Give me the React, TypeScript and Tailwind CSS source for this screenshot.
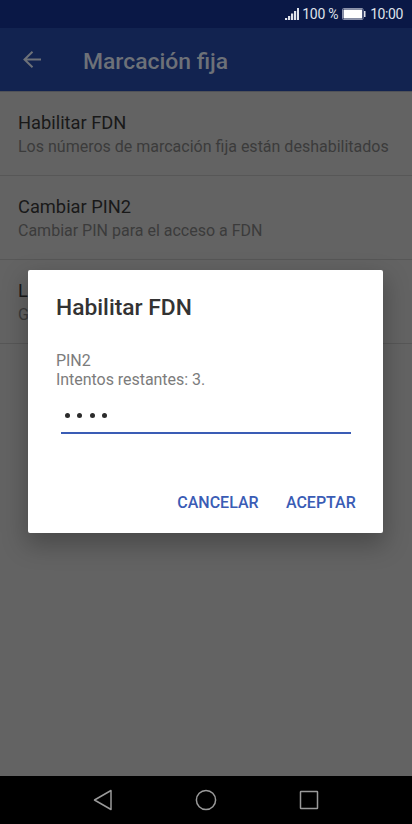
import clsx from "clsx";
import * as React from "react";

interface Preference {
  title: string;
  summary: string;
}

const preferences: Preference[] = [
  {
    title: "Habilitar FDN",
    summary: "Los números de marcación fija están deshabilitados",
  },
  { title: "Cambiar PIN2", summary: "Cambiar PIN para el acceso a FDN" },
  { title: "L", summary: "G" },
];

function StatusBar() {
  return (
    <div className="flex h-7 shrink-0 items-center justify-end bg-[#0a1846] pr-[9px] text-[14px] leading-none text-[#dfe2ea]">
      <svg
        className="mr-[3px] h-[12px] w-[14px]"
        viewBox="0 0 14 12"
        fill="currentColor"
        aria-hidden="true"
      >
        <rect x="0" y="10" width="2.2" height="2" />
        <rect x="3" y="8" width="2.2" height="4" />
        <rect x="6" y="5.5" width="2.2" height="6.5" />
        <rect x="9" y="3" width="2.2" height="9" />
        <rect x="12" y="0" width="2" height="12" />
      </svg>
      <span className="mr-[4px] tracking-[-0.3px]">100 %</span>
      <svg
        className="mr-[4px] h-[12px] w-[24px]"
        viewBox="0 0 24 12"
        aria-hidden="true"
      >
        <rect
          x="0.5"
          y="0.5"
          width="20.5"
          height="11"
          rx="1"
          fill="none"
          stroke="#8c93ab"
        />
        <rect x="1.5" y="1.5" width="18.5" height="9" fill="#fff" />
        <rect x="22" y="3" width="1.5" height="6" fill="#dfe2ea" />
      </svg>
      <span className="tracking-[-0.4px]">10:00</span>
    </div>
  );
}

function Toolbar() {
  return (
    <header className="flex h-[63px] shrink-0 items-center bg-[#122350] pt-[3px] pl-[23px] text-[#6d7178]">
      <svg
        className="mb-[3px] h-[18px] w-[18px]"
        viewBox="0 0 18 18"
        fill="none"
        stroke="currentColor"
        strokeWidth="2"
        aria-hidden="true"
      >
        <path d="M18 8.5H1.5M9.5 0.7L1.5 8.5L9.5 16.3" />
      </svg>
      <h1 className="mt-[2px] ml-[42px] text-[22.9px] leading-7 font-medium">
        Marcación fija
      </h1>
    </header>
  );
}

function PreferenceRow({ title, summary }: Preference) {
  return (
    <li className="h-[84px] border-b border-[#575757] pt-[18px] pl-[18px] whitespace-nowrap">
      <div className="text-[18.3px] leading-[25px] text-[#191919]">{title}</div>
      <div className="mt-px text-[16px] leading-[22px] text-[#3b3b3b]">
        {summary}
      </div>
    </li>
  );
}

function PinDialog() {
  const [pin, setPin] = React.useState("1234");
  return (
    <div
      role="dialog"
      aria-labelledby="dialog-title"
      className="absolute top-[270px] left-[28.4px] flex h-[263px] w-[355px] flex-col rounded-[2px] bg-white px-[27.6px] shadow-[0_10px_24px_2px_rgba(0,0,0,0.26)]"
    >
      <h2
        id="dialog-title"
        className="mt-[23px] text-[22.8px] leading-[30px] font-medium text-[#333]"
      >
        Habilitar FDN
      </h2>
      <div className="mt-[28px] text-[16px] leading-[19px] tracking-[-0.04px] text-[#7c7c7c]">
        <p>PIN2</p>
        <p>Intentos restantes: 3.</p>
      </div>
      <label
        className={clsx(
          "relative mr-[5px] ml-[4.6px] mt-[7px] flex h-[38px] items-center",
          "border-b-2 border-[#3a5cb5] pt-[3px] pl-[4px]"
        )}
      >
        <input
          aria-label="PIN2"
          type="password"
          inputMode="numeric"
          className="absolute inset-0 w-full opacity-0"
          value={pin}
          onChange={(event) => setPin(event.target.value)}
        />
        <span className="flex gap-[7.6px]" aria-hidden="true">
          {pin.split("").map((_, i) => (
            <span key={i} className="h-[5px] w-[5px] rounded-full bg-[#2b2b2b]" />
          ))}
        </span>
      </label>
      <div className="mt-[57px] flex justify-end gap-[27.3px] text-[16px] leading-6 font-medium text-[#3a5cb5]">
        <button type="button">CANCELAR</button>
        <button type="button">ACEPTAR</button>
      </div>
    </div>
  );
}

function NavigationBar() {
  return (
    <nav className="flex h-12 shrink-0 items-center bg-black pl-[93px] text-[#9a9a9a]">
      <svg
        className="h-[22px] w-[226px]"
        viewBox="0 0 226 22"
        fill="none"
        stroke="currentColor"
        strokeWidth="1.5"
        strokeLinejoin="round"
        aria-hidden="true"
      >
        <path d="M18 1.5V20.5L1.5 11Z" />
        <circle cx="113" cy="11" r="9.6" />
        <rect x="207.5" y="2.5" width="17" height="17" rx="0.5" />
      </svg>
    </nav>
  );
}

export default function App() {
  return (
    <div className="relative flex h-[824px] w-[412px] flex-col overflow-hidden bg-[#636363] font-[Roboto,sans-serif]">
      <StatusBar />
      <Toolbar />
      <ul className="flex-auto border-t border-[#505258]">
        {preferences.map((preference) => (
          <PreferenceRow key={preference.title} {...preference} />
        ))}
      </ul>
      <PinDialog />
      <NavigationBar />
    </div>
  );
}
